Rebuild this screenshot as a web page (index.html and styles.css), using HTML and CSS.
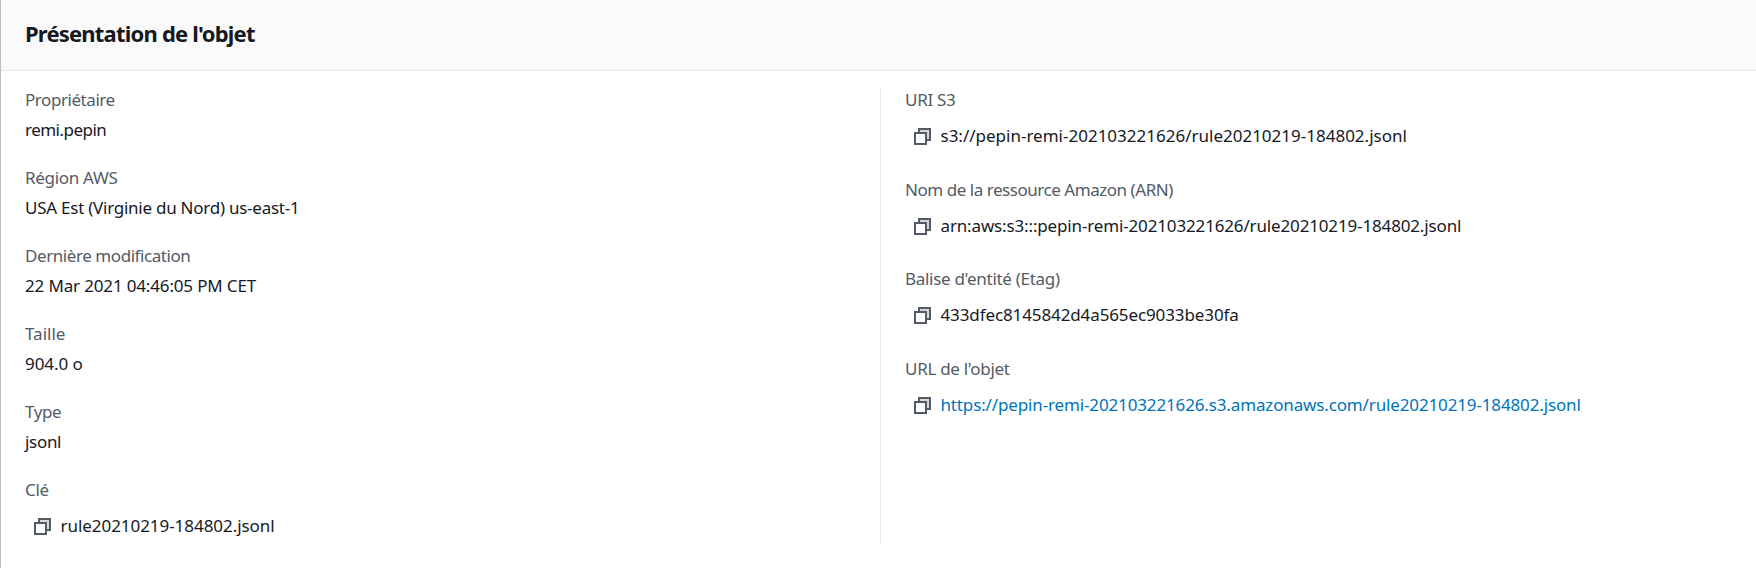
FILE: index.html
```html
<!DOCTYPE html>
<html lang="fr">
<head>
<meta charset="utf-8">
<title>Présentation de l'objet</title>
<link rel="stylesheet" href="styles.css">
</head>
<body>
<svg class="sprite" aria-hidden="true">
  <symbol id="copy" viewBox="0 0 17 17">
    <path class="icon-shade" d="M5 2h10v10h-3V5H5z" />
    <path d="M5 5V1h11v11h-4" />
    <path d="M1 5h11v11H1z" />
  </symbol>
</svg>
<section class="panel">
  <header class="panel-header"><h2 class="title">Présentation de l'objet</h2></header>
  <div class="columns">
    <dl class="column column-left">
      <div class="item owner"><dt class="label">Propriétaire</dt><dd class="value">remi.pepin</dd></div>
      <div class="item region"><dt class="label">Région AWS</dt><dd class="value">USA Est (Virginie du Nord) us-east-1</dd></div>
      <div class="item modified"><dt class="label">Dernière modification</dt><dd class="value">22 Mar 2021 04:46:05 PM CET</dd></div>
      <div class="item size"><dt class="label">Taille</dt><dd class="value">904.0 o</dd></div>
      <div class="item type"><dt class="label">Type</dt><dd class="value">jsonl</dd></div>
      <div class="item key"><dt class="label">Clé</dt><dd class="value copyable"><svg class="icon"><use href="#copy"/></svg><span>rule20210219-184802.jsonl</span></dd></div>
    </dl>
    <dl class="column column-right">
      <div class="item uri"><dt class="label">URI S3</dt><dd class="value copyable"><svg class="icon"><use href="#copy"/></svg><span>s3://pepin-remi-202103221626/rule20210219-184802.jsonl</span></dd></div>
      <div class="item arn"><dt class="label">Nom de la ressource Amazon (ARN)</dt><dd class="value copyable"><svg class="icon"><use href="#copy"/></svg><span>arn:aws:s3:::pepin-remi-202103221626/rule20210219-184802.jsonl</span></dd></div>
      <div class="item etag"><dt class="label">Balise d'entité (Etag)</dt><dd class="value copyable"><svg class="icon"><use href="#copy"/></svg><span>433dfec8145842d4a565ec9033be30fa</span></dd></div>
      <div class="item url"><dt class="label">URL de l'objet</dt><dd class="value copyable"><svg class="icon"><use href="#copy"/></svg><a class="link" href="#">https://pepin-remi-202103221626.s3.amazonaws.com/rule20210219-184802.jsonl</a></dd></div>
    </dl>
  </div>
</section>
</body>
</html>
```

FILE: styles.css
```css
* { box-sizing: border-box; }
body {
  margin: 0;
  background: #fff;
  color: #16191f;
  font: 17px/21px "Noto Sans", sans-serif;
}
.sprite { display: none; }
.panel { height: 568px; border-left: 1px solid #b9bfc9; overflow: hidden; }
.panel-header {
  height: 71px;
  padding: 18px 24px;
  background: #fafafa;
  border-bottom: 1px solid #eaeded;
}
.title { margin: 0; font-size: 22px; line-height: 30px; font-weight: 700; letter-spacing: -0.8px; }
.columns { display: grid; grid-template-columns: 879px 1fr; padding-top: 18px; }
.column { display: flex; flex-direction: column; height: 455px; margin: 0; padding-left: 24px; }
.column-left { gap: 27px; }
.column-right { gap: 26.67px; border-left: 1px solid #eaeded; }
.label { color: #545b64; letter-spacing: -0.3px; white-space: nowrap; }
.value { margin: 9px 0 0; letter-spacing: -0.3px; white-space: nowrap; }
.copyable { display: flex; margin-top: 15px; padding: 0 0 6px 9px; gap: 9.5px; }
.icon { width: 17px; height: 17px; margin-top: 3px; fill: none; stroke: #545b64; stroke-width: 2; }
.icon-shade { fill: #d5d9df; stroke: none; }
.link { color: #0073bb; text-decoration: none; }

/* Tracking per field */
.owner .label { letter-spacing: -0.44px; }
.owner .value { letter-spacing: -0.52px; }
.region .value { letter-spacing: -0.25px; }
.modified .label { letter-spacing: -0.43px; }
.modified .value { letter-spacing: -0.155px; }
.size .label { letter-spacing: 0; }
.size .value { letter-spacing: -0.06px; }
.type .label { letter-spacing: -0.4px; }
.key .value { letter-spacing: -0.05px; }
.uri .value { letter-spacing: 0; }
.arn .label { letter-spacing: -0.46px; }
.arn .value { letter-spacing: -0.15px; }
.etag .value { letter-spacing: -0.11px; }
.url .value { letter-spacing: -0.14px; }
```
